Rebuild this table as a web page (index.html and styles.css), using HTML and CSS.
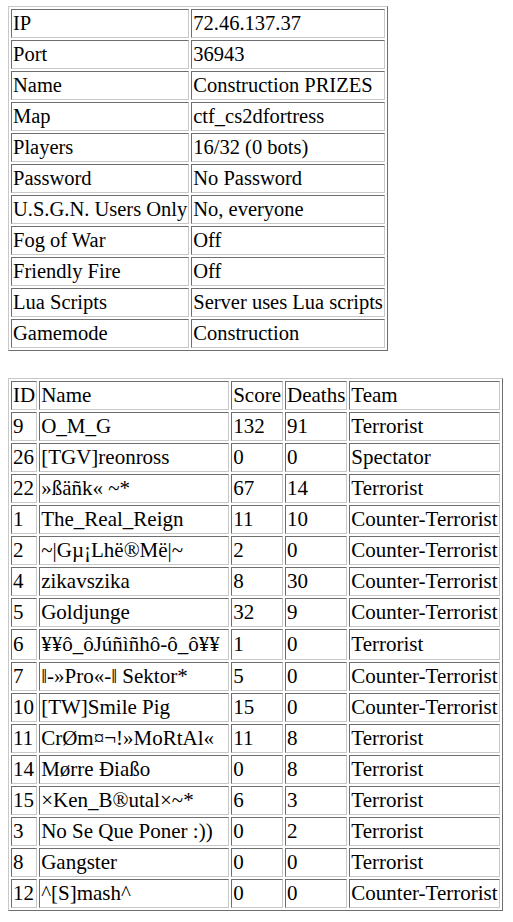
FILE: index.html
```html
<!DOCTYPE html>
<html>
<head>
<meta charset="utf-8">
<link rel="stylesheet" href="styles.css">
</head>
<body>
<table class="grid info">
<tr><td>IP</td><td>72.46.137.37</td></tr>
<tr><td>Port</td><td>36943</td></tr>
<tr><td>Name</td><td>Construction PRIZES</td></tr>
<tr><td>Map</td><td>ctf_cs2dfortress</td></tr>
<tr><td>Players</td><td>16/32 (0 bots)</td></tr>
<tr><td>Password</td><td>No Password</td></tr>
<tr><td>U.S.G.N. Users Only</td><td>No, everyone</td></tr>
<tr><td>Fog of War</td><td>Off</td></tr>
<tr><td>Friendly Fire</td><td>Off</td></tr>
<tr><td>Lua Scripts</td><td>Server uses Lua scripts</td></tr>
<tr><td>Gamemode</td><td>Construction</td></tr>
</table>
<table class="grid players">
<tr><td>ID</td><td class="name-col">Name</td><td>Score</td><td>Deaths</td><td>Team</td></tr>
<tr><td>9</td><td>O_M_G</td><td>132</td><td>91</td><td>Terrorist</td></tr>
<tr><td>26</td><td>[TGV]reonross</td><td>0</td><td>0</td><td>Spectator</td></tr>
<tr><td>22</td><td>»ßäñk« ~*</td><td>67</td><td>14</td><td>Terrorist</td></tr>
<tr><td>1</td><td>The_Real_Reign</td><td>11</td><td>10</td><td>Counter-Terrorist</td></tr>
<tr><td>2</td><td>~|Gµ¡Lhë®Më|~</td><td>2</td><td>0</td><td>Counter-Terrorist</td></tr>
<tr><td>4</td><td>zikavszika</td><td>8</td><td>30</td><td>Counter-Terrorist</td></tr>
<tr><td>5</td><td>Goldjunge</td><td>32</td><td>9</td><td>Counter-Terrorist</td></tr>
<tr class="tall"><td>6</td><td>¥¥ô_ôJúñìñhô-ô_ô¥¥</td><td>1</td><td>0</td><td>Terrorist</td></tr>
<tr><td>7</td><td>‖-»Pro«-‖ Sektor*</td><td>5</td><td>0</td><td>Counter-Terrorist</td></tr>
<tr><td>10</td><td>[TW]Smile Pig</td><td>15</td><td>0</td><td>Counter-Terrorist</td></tr>
<tr><td>11</td><td>CrØm¤¬!»MoRtAl«</td><td>11</td><td>8</td><td>Terrorist</td></tr>
<tr><td>14</td><td>Mørre Ðiaßo</td><td>0</td><td>8</td><td>Terrorist</td></tr>
<tr><td>15</td><td>×Ken_B®utal×~*</td><td>6</td><td>3</td><td>Terrorist</td></tr>
<tr><td>3</td><td>No Se Que Poner :))</td><td>0</td><td>2</td><td>Terrorist</td></tr>
<tr><td>8</td><td>Gangster</td><td>0</td><td>0</td><td>Terrorist</td></tr>
<tr><td>12</td><td>^[S]mash^</td><td>0</td><td>0</td><td>Counter-Terrorist</td></tr>
</table>
</body>
</html>
```
FILE: styles.css
```css
body {
  margin: 6px 8px 8px 8px;
  font-family: "Liberation Serif", "Times New Roman", Times, serif;
  font-size: 21px;
  color: #000;
  background: #fff;
}
.grid {
  border-collapse: separate;
  border-spacing: 2px;
  border-style: solid;
  border-width: 1px;
  border-color: #c8c8c8 #6e6e6e #6e6e6e #c8c8c8;
}
.grid td {
  padding: 1px;
  line-height: 25px;
  border-style: solid;
  border-width: 1px;
  border-color: #6e6e6e #c8c8c8 #c8c8c8 #6e6e6e;
  white-space: nowrap;
  text-align: left;
  vertical-align: middle;
}
.info {
  font-size: 20.5px;
  margin-bottom: 27px;
}
.players .name-col {
  width: 186px;
}
.players .tall td {
  line-height: 27px;
}
```
